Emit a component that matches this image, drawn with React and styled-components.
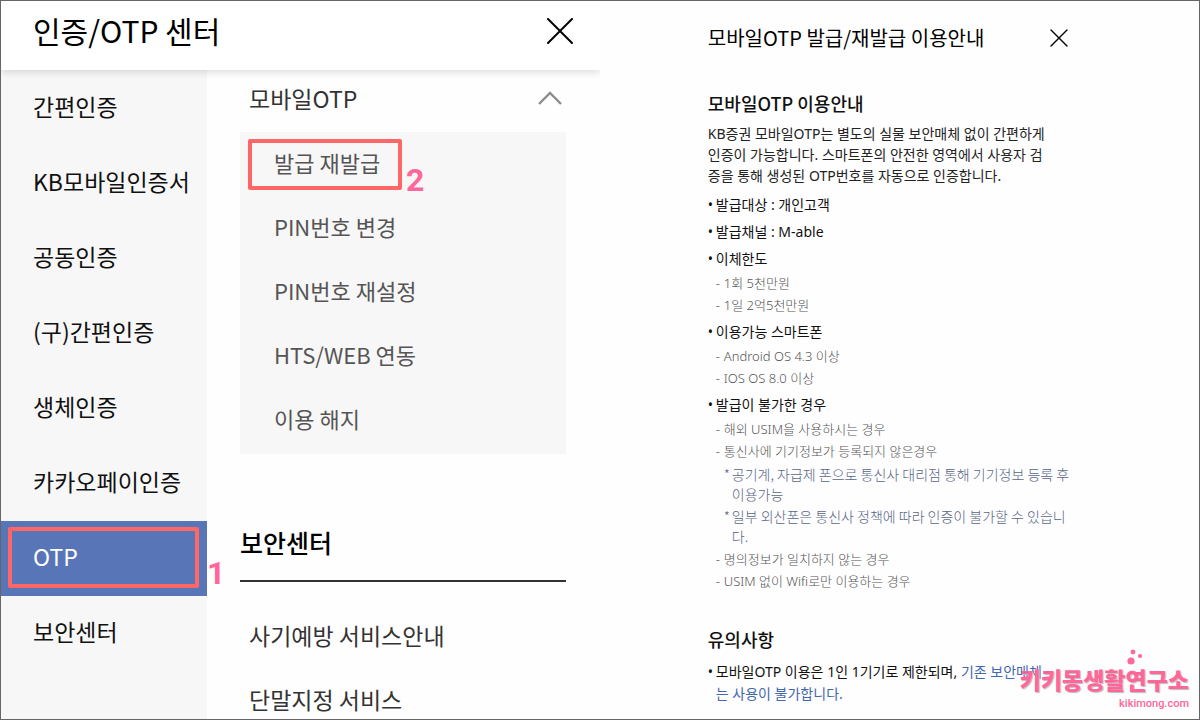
import React, { useState } from "react"
import styled, { createGlobalStyle } from "styled-components"

const sideMenu = [
  "간편인증",
  "KB모바일인증서",
  "공동인증",
  "(구)간편인증",
  "생체인증",
  "카카오페이인증",
  "OTP",
  "보안센터",
]

const otpMenu = [
  "발급 재발급",
  "PIN번호 변경",
  "PIN번호 재설정",
  "HTS/WEB 연동",
  "이용 해지",
]

const securityMenu = ["사기예방 서비스안내", "단말지정 서비스"]

const CloseIcon = ({ size, stroke }) => (
  <svg width={size} height={size} viewBox={`0 0 ${size} ${size}`}>
    <path
      d={`M1 1L${size - 1} ${size - 1}M${size - 1} 1L1 ${size - 1}`}
      stroke="currentColor"
      strokeWidth={stroke}
      strokeLinecap="round"
      fill="none"
    />
  </svg>
)

const Center = () => {
  const [selected, setSelected] = useState("OTP")
  const [open, setOpen] = useState(true)
  return (
    <CenterPane>
      <CenterHeader>
        <CenterTitle>인증/OTP 센터</CenterTitle>
        <IconButton aria-label="닫기">
          <CloseIcon size={26} stroke={2} />
        </IconButton>
      </CenterHeader>
      <CenterBody>
        <SideNav>
          {sideMenu.map((name) => (
            <SideItem
              key={name}
              $active={name === selected}
              onClick={() => setSelected(name)}
            >
              {name}
              {name === "OTP" && (
                <StepFrame $side>
                  <StepNumber $side>1</StepNumber>
                </StepFrame>
              )}
            </SideItem>
          ))}
        </SideNav>
        <MenuArea>
          <GroupToggle onClick={() => setOpen(!open)} aria-expanded={open}>
            모바일OTP
            <svg width="24" height="14" viewBox="0 0 24 14">
              <path d="M1 13L12 2L23 13" stroke="#8c8c8c" strokeWidth="2.4" fill="none" />
            </svg>
          </GroupToggle>
          {open && (
            <SubMenu>
              {otpMenu.map((name, i) => (
                <SubItem key={name} href="#">
                  {name}
                  {i === 0 && (
                    <StepFrame>
                      <StepNumber>2</StepNumber>
                    </StepFrame>
                  )}
                </SubItem>
              ))}
            </SubMenu>
          )}
          <GroupHeading>보안센터</GroupHeading>
          <LinkList>
            {securityMenu.map((name) => (
              <MenuLink key={name} href="#">
                {name}
              </MenuLink>
            ))}
          </LinkList>
        </MenuArea>
      </CenterBody>
    </CenterPane>
  )
}

const Item = ({ mark, children }) => (
  <Entry>
    <Mark>{mark}</Mark>
    <div>{children}</div>
  </Entry>
)

const Guide = () => (
  <GuidePane>
    <GuideHeader>
      <GuideTitle>모바일OTP 발급/재발급 이용안내</GuideTitle>
      <IconButton aria-label="닫기">
        <CloseIcon size={18} stroke={1.4} />
      </IconButton>
    </GuideHeader>
    <GuideHeading>모바일OTP 이용안내</GuideHeading>
    <Intro>
      KB증권 모바일OTP는 별도의 실물 보안매체 없이 간편하게
      <br />
      인증이 가능합니다. 스마트폰의 안전한 영역에서 사용자 검<br />
      증을 통해 생성된 OTP번호를 자동으로 인증합니다.
    </Intro>
    <List>
      <Item mark="•">발급대상 : 개인고객</Item>
      <Item mark="•">발급채널 : M-able</Item>
      <Item mark="•">
        이체한도
        <SubList>
          <Item mark="-">1회 5천만원</Item>
          <Item mark="-">1일 2억5천만원</Item>
        </SubList>
      </Item>
      <Item mark="•">
        이용가능 스마트폰
        <SubList>
          <Item mark="-">Android OS 4.3 이상</Item>
          <Item mark="-">IOS OS 8.0 이상</Item>
        </SubList>
      </Item>
      <Item mark="•">
        발급이 불가한 경우
        <SubList>
          <Item mark="-">해외 USIM을 사용하시는 경우</Item>
          <Item mark="-">
            통신사에 기기정보가 등록되지 않은경우
            <NoteList>
              <Item mark="*">
                공기계, 자급제 폰으로 통신사 대리점 통해 기기정보 등록 후
                <br />
                이용가능
              </Item>
              <Item mark="*">
                일부 외산폰은 통신사 정책에 따라 인증이 불가할 수 있습니
                <br />
                다.
              </Item>
            </NoteList>
          </Item>
          <Item mark="-">명의정보가 일치하지 않는 경우</Item>
          <Item mark="-">USIM 없이 Wifi로만 이용하는 경우</Item>
        </SubList>
      </Item>
    </List>
    <GuideHeading $spaced>유의사항</GuideHeading>
    <List>
      <Item mark="•">
        모바일OTP 이용은 1인 1기기로 제한되며,{" "}
        <Point>
          기존 보안매체
          <br />는 사용이 불가합니다.
        </Point>
      </Item>
    </List>
  </GuidePane>
)

const App = () => (
  <>
    <GlobalStyle />
    <Page>
      <Center />
      <Guide />
      <Watermark>
        <Dots width="14" height="16" viewBox="0 0 14 16">
          <circle cx="6" cy="3" r="2.4" />
          <circle cx="13" cy="7" r="2" />
          <circle cx="4" cy="12" r="3.6" />
        </Dots>
        <BlogName>키키몽생활연구소</BlogName>
        <BlogUrl>kikimong.com</BlogUrl>
      </Watermark>
    </Page>
  </>
)

export default App

const GlobalStyle = createGlobalStyle`
  * {
    box-sizing: border-box;
  }
  body {
    margin: 0;
    background: #fefefe;
    font-family: "Noto Sans CJK KR", "Noto Sans", sans-serif;
  }
  button {
    font-family: inherit;
  }
  h1, h2, p, ul {
    margin: 0;
    padding: 0;
  }
`

const Page = styled.main`
  position: relative;
  display: grid;
  grid-template-columns: 1fr 1fr;
  min-height: 100vh;
  border: 1px solid #666;
`

const CenterPane = styled.section`
  display: flex;
  flex-direction: column;
  overflow: hidden;
`

const CenterHeader = styled.header`
  position: relative;
  z-index: 1;
  display: flex;
  align-items: center;
  justify-content: space-between;
  padding: 0 27px 9px 32px;
  height: 69px;
  background: #fff;
  box-shadow: 0 2px 8px rgba(0, 0, 0, 0.15);
`

const CenterTitle = styled.h1`
  padding-bottom: 3px;
  font-size: 30px;
  line-height: 40px;
  font-weight: 400;
  color: #000;
`

const IconButton = styled.button`
  display: flex;
  padding: 0;
  border: 0;
  background: none;
  color: #000;
  cursor: pointer;
`

const CenterBody = styled.div`
  display: flex;
  flex: 1;
`

const SideNav = styled.nav`
  flex: 0 0 206px;
  padding-top: 1px;
  background: #f7f7f7;
`

const SideItem = styled.button`
  position: relative;
  display: block;
  width: 100%;
  height: 75px;
  padding: 0 0 5px 32px;
  border: 0;
  text-align: left;
  white-space: nowrap;
  font-size: 23px;
  color: ${({ $active }) => ($active ? "#fff" : "#111")};
  background: ${({ $active }) => ($active ? "#5876b7" : "transparent")};
  cursor: pointer;
`

const StepFrame = styled.span`
  position: absolute;
  left: ${({ $side }) => ($side ? "7px" : "8px")};
  top: 6px;
  width: ${({ $side }) => ($side ? "191px" : "154px")};
  height: ${({ $side }) => ($side ? "61px" : "51px")};
  border: 4px solid #ff6666;
  border-radius: 2px;
`

const StepNumber = styled.b`
  position: absolute;
  left: 100%;
  bottom: ${({ $side }) => ($side ? "-5px" : "-10px")};
  margin-left: ${({ $side }) => ($side ? "12px" : "8px")};
  font-family: Roboto, sans-serif;
  font-size: 32px;
  line-height: 32px;
  font-weight: 700;
  color: #ff6699;
`

const MenuArea = styled.div`
  flex: 1;
  padding: 12px 34px 0 33px;
`

const GroupToggle = styled.button`
  display: flex;
  align-items: center;
  justify-content: space-between;
  width: 100%;
  height: 34px;
  padding: 0 4px 2px 9px;
  border: 0;
  background: none;
  font-size: 23px;
  color: #333;
  cursor: pointer;
`

const SubMenu = styled.div`
  margin-top: 16px;
  padding: 1px 0;
  background: #f7f7f7;
`

const SubItem = styled.a`
  position: relative;
  display: flex;
  align-items: center;
  height: 64px;
  padding: 0 0 6px 34px;
  font-size: 22px;
  color: #555;
  text-decoration: none;
`

const GroupHeading = styled.h2`
  margin-top: 70px;
  padding-bottom: 20px;
  border-bottom: 2px solid #333;
  font-size: 25px;
  line-height: 36px;
  font-weight: 500;
  color: #000;
`

const LinkList = styled.div`
  display: flex;
  flex-direction: column;
  gap: 32px;
  padding: 37px 9px 0;
`

const MenuLink = styled.a`
  font-size: 23px;
  line-height: 32px;
  color: #333;
  text-decoration: none;
`

const GuidePane = styled.section`
  padding: 23px 21% 0 18%;
  white-space: nowrap;
`

const GuideHeader = styled.header`
  display: flex;
  align-items: center;
  justify-content: space-between;
  height: 28px;
  padding-right: 5px;
  margin-bottom: 37px;
`

const GuideTitle = styled.h1`
  padding-bottom: 2px;
  font-size: 20px;
  font-weight: 400;
  color: #000;
`

const GuideHeading = styled.h2`
  margin: ${({ $spaced }) => ($spaced ? "33px 0 8px" : "0 0 6px")};
  font-size: 18px;
  line-height: 28px;
  font-weight: 500;
  color: #111;
`

const Intro = styled.p`
  margin-bottom: 8px;
  font-family: "Noto Sans", "Noto Sans CJK KR", sans-serif;
  font-size: 14px;
  line-height: 21px;
  color: #222;
`

const List = styled.ul`
  display: flex;
  flex-direction: column;
  gap: 5px;
  list-style: none;
  font-family: "Noto Sans", "Noto Sans CJK KR", sans-serif;
  font-size: 14px;
  line-height: 22px;
  color: #111;
`

const SubList = styled(List)`
  gap: 0;
  margin-top: 2px;
  font-size: 13px;
  font-weight: 300;
  color: #555;
`

const NoteList = styled(List)`
  gap: 2px;
  margin: 2px 0;
  font-family: "Noto Sans CJK KR", sans-serif;
  line-height: 20px;
  color: #5a6588;
`

const Entry = styled.li`
  display: flex;
`

const Mark = styled.span`
  flex: 0 0 8px;
`

const Point = styled.span`
  color: #4468b0;
`

const Watermark = styled.aside`
  position: absolute;
  right: 10px;
  bottom: 8px;
  display: flex;
  flex-direction: column;
  align-items: flex-end;
  gap: 4px;
  color: #ff6699;
  font-weight: 900;
`

const BlogName = styled.span`
  font-size: 23px;
  line-height: 28px;
  text-shadow: 1px 1px 1px #bbb;
`

const BlogUrl = styled.span`
  font-family: Roboto, sans-serif;
  font-size: 11px;
  line-height: 14px;
  font-weight: 500;
`

const Dots = styled.svg`
  position: absolute;
  right: 48px;
  bottom: 100%;
  fill: #ff6699;
  overflow: visible;
`
